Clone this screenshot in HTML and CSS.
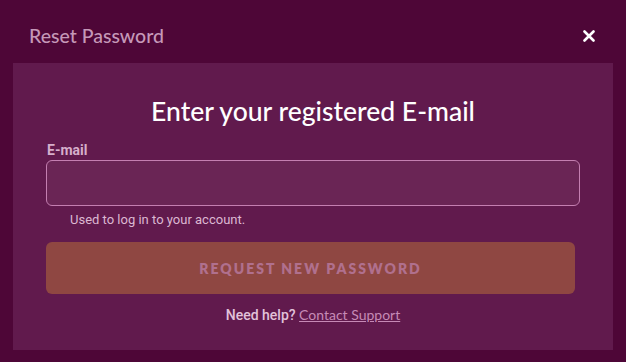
FILE: index.html
```html
<!DOCTYPE html>
<html>
<head>
<meta charset="utf-8">
<link rel="stylesheet" href="styles.css">
</head>
<body>
<div class="modal">
  <div class="header">
    <span class="title">Reset Password</span>
    <span class="close">
      <svg width="12" height="12" viewBox="0 0 12 12"><path d="M1.5 1.5 L10.5 10.5 M10.5 1.5 L1.5 10.5" stroke="#fff" stroke-width="2.6" stroke-linecap="round"/></svg>
    </span>
  </div>
  <div class="panel">
    <h1 class="heading">Enter your registered E-mail</h1>
    <label class="label">E-mail</label>
    <div class="input"></div>
    <div class="helper">Used to log in to your account.</div>
    <div class="button">REQUEST NEW PASSWORD</div>
    <div class="footer">Need help? <span class="link">Contact Support</span></div>
  </div>
</div>
</body>
</html>
```
FILE: styles.css
```css
html, body { margin: 0; padding: 0; }
body { background: #4e0637; width: 626px; height: 362px; overflow: hidden; font-family: Roboto, "Liberation Sans", sans-serif; }
.modal { display: flex; flex-direction: column; padding: 0 13px 0 13px; }
.header { height: 63px; display: flex; align-items: center; justify-content: space-between; padding: 0 18px 0 16px; box-sizing: border-box; }
.title { font-family: Lato, sans-serif; font-size: 19.5px; color: #c598b8; font-weight: 500; margin-top: 8px; }
.close { display: flex; margin-top: 8px; }
.panel { background: #611a4d; height: 287px; box-sizing: border-box; padding: 32px 33px 0 33px; display: flex; flex-direction: column; }
.heading { margin: 0; font-family: Lato, sans-serif; font-weight: 500; font-size: 26.5px; line-height: 32px; color: #fff; text-align: center; }
.label { margin-top: 15px; font-size: 14px; line-height: 16px; font-weight: 700; color: #d6aecb; padding-left: 1px; }
.input { margin-top: 2px; height: 46px; box-sizing: border-box; border: 1px solid #c47fb1; border-radius: 6px; background: #6a2555; }
.helper { margin-top: 7px; padding-left: 24px; font-size: 13px; line-height: 14px; color: #dcb8d2; }
.button { margin-top: 15px; margin-right: 5px; height: 52px; border-radius: 6px; background: #8f4742; display: flex; align-items: center; justify-content: center; font-family: Lato, sans-serif; font-weight: 800; font-size: 14px; letter-spacing: 2px; color: #b0708e; }
.footer { margin-top: 13px; text-align: center; font-size: 14px; line-height: 16px; color: #e2c2da; font-weight: 500; }
.link { color: #c68ab6; text-decoration: underline; font-weight: 400; font-family: Lato, sans-serif; }
```
